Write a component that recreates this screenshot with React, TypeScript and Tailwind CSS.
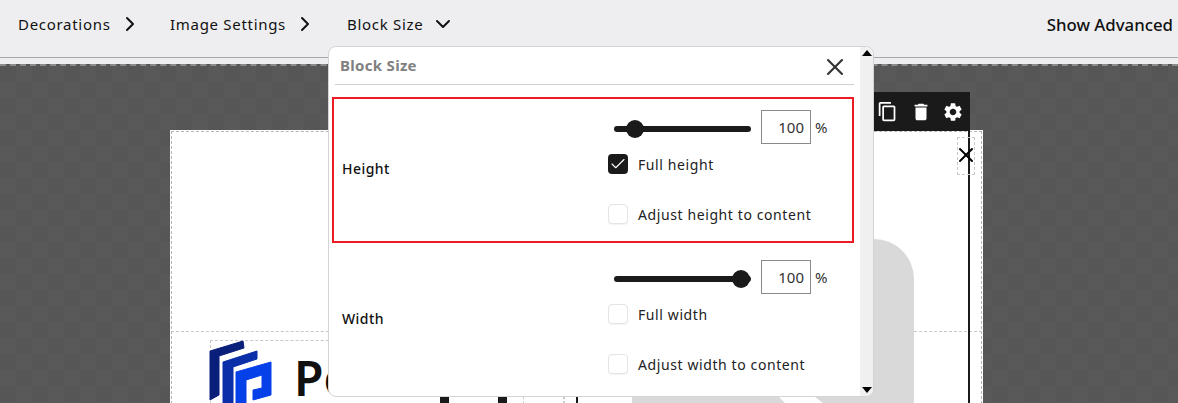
import { Check, ChevronDown, ChevronRight, X } from 'lucide-react'
import { MdContentCopy, MdDelete, MdSettings } from 'react-icons/md'

const font = "font-['Noto_Sans',sans-serif]"

function Crumb({ label, open, width }: { label: string; open?: boolean; width: string }) {
  return (
    <div className={`flex items-center ${width}`}>
      <span className="text-[15px] tracking-[0.7px] text-[#111]">{label}</span>
      {open ? (
        <ChevronDown className="ml-[8px] size-[24px] text-[#111]" strokeWidth={2} />
      ) : (
        <ChevronRight className="ml-[7px] size-[24px] text-[#111]" strokeWidth={2} />
      )}
    </div>
  )
}

function Slider({ value }: { value: number }) {
  return (
    <div className="relative mt-[4px] h-[6px] w-[137px] rounded-full bg-[#1a1a1a]">
      <div
        className="absolute top-[-6px] size-[18px] -translate-x-1/2 rounded-full bg-[#1a1a1a]"
        style={{ left: `${value}%` }}
      />
    </div>
  )
}

function Option({ label, checked }: { label: string; checked?: boolean }) {
  return (
    <div className="flex h-[20px] items-center">
      {checked ? (
        <div className="flex size-[20px] items-center justify-center rounded-[4px] bg-[#1a1a1a]">
          <Check className="size-[18px] text-white" strokeWidth={1.5} />
        </div>
      ) : (
        <div className="size-[20px] rounded-[4px] border border-[#e4e4e4] bg-white shadow-[0_1px_1px_rgba(0,0,0,0.05)]" />
      )}
      <span className="ml-[10px] text-[14px] tracking-[0.6px] text-[#222]">{label}</span>
    </div>
  )
}

function SizeRow({
  label,
  value,
  options,
  className,
}: {
  label: string
  value: number
  options: { label: string; checked?: boolean }[]
  className: string
}) {
  return (
    <div className={`flex ${className}`}>
      <div className="mt-[48px] w-[274px] self-start pl-[8px] text-[14px] font-medium tracking-[0.45px] text-[#111]">
        {label}
      </div>
      <div className="flex flex-col">
        <div className="flex h-[34px] items-center pl-[6px]">
          <Slider value={value} />
          <div className="ml-[10px] flex h-[34px] w-[50px] items-center justify-end border border-[#8a8a8a] pr-[6px] text-[15px] text-[#333]">
            100
          </div>
          <span className="ml-[4px] text-[15px] text-[#333]">%</span>
        </div>
        <div className="mt-[10px] flex flex-col gap-[30px]">
          {options.map((o) => (
            <Option key={o.label} label={o.label} checked={o.checked} />
          ))}
        </div>
      </div>
    </div>
  )
}

export default function App() {
  return (
    <div className={`${font} relative h-[403px] w-[1178px] overflow-hidden bg-[#eeeef0]`}>
      {/* top toolbar */}
      <div className="flex h-[58px] items-center border-b border-[#a8a8a8] pb-[9px] pl-[18px]">
        <Crumb label="Decorations" width="w-[152px]" />
        <Crumb label="Image Settings" width="w-[177px]" />
        <Crumb label="Block Size" open width="w-[200px]" />
        <span className="ml-auto pr-[5px] pt-[1px] text-[16.8px] font-medium text-[#111]">Show Advanced</span>
      </div>

      {/* canvas */}
      <div className="absolute inset-x-0 bottom-0 top-[64px] overflow-hidden border-t-2 border-dashed border-t-[#8c8c8c] bg-[repeating-conic-gradient(#595959_0_25%,#565656_0_50%)] bg-[length:32px_32px]">
        <div className="absolute left-[170px] top-[64px] h-[300px] w-[813px] border border-white bg-white">
          <div className="absolute inset-0 border border-dashed border-[#b5b5b5]" />
          <div className="absolute inset-x-0 top-[200px] border-t border-dashed border-[#c8c8c8]" />
          <div className="absolute left-[39px] top-[209px] h-[100px] w-[355px] border border-dashed border-[#c8c8c8]" />
          <div className="absolute left-[352px] top-[209px] h-[100px] border-l border-dashed border-[#c8c8c8]" />
          <div className="absolute left-[392px] top-[209px] h-[100px] border-l border-dashed border-[#c8c8c8]" />
          <svg className="absolute left-[38px] top-[209px]" width="70" height="63" viewBox="0 0 70 63">
            <path d="M1 11 L34 1 L35 8 L10 16 L10 55 L1 60 Z" fill="#0a1f7a" stroke="#0a1f7a" strokeLinejoin="round" />
            <path d="M14 22 L48 11 L48 19 L24 27 L24 63 L14 63 Z" fill="#0b2fa8" stroke="#0b2fa8" strokeLinejoin="round" />
            <path
              d="M27 32 L62 22 L62 55 L44 60 L44 50 L53 48 L53 35 L37 40 L37 63 L27 63 Z"
              fill="#0640e8"
              stroke="#0640e8"
              strokeLinejoin="round"
            />
          </svg>
          <span className="absolute left-[123px] top-[223px] text-[48px] font-semibold leading-none text-[#111]">Po</span>
          <div className="absolute left-[269px] top-[265px] h-[40px] w-[9px] bg-[#1a1a1a]" />
          <div className="absolute left-[327px] top-[265px] h-[40px] w-[9px] bg-[#1a1a1a]" />
          <div className="absolute left-[405px] top-[264px] h-[40px] w-[2px] bg-[#1a1a1a]" />
          {/* faint shape behind the panel */}
          <div className="absolute left-[461px] top-[108px] h-[200px] w-[282px] rounded-tr-[40px] bg-[#d9d9d9]" />
          <svg className="absolute left-[607px] top-[265px]" width="50" height="8" viewBox="0 0 50 8">
            <path d="M0 0 L36 0 L46 8 L8 8 Z" fill="#fff" />
          </svg>
          <div className="absolute bottom-0 left-[797px] top-0 w-[2px] bg-[#1a1a1a]" />
          <div className="absolute left-[786px] top-[6px] flex h-[38px] w-[18px] items-center justify-center border border-dashed border-[#c8c8c8]">
            <X className="-mt-[2px] size-[24px] shrink-0 text-black" strokeWidth={2} />
          </div>
        </div>
        <div className="absolute left-[860px] top-[26px] flex h-[39px] w-[110px] items-center bg-[#1a1a1a] pl-[17px] text-white">
          <MdContentCopy size={21} />
          <MdDelete size={22} className="ml-[12px]" />
          <MdSettings size={22} className="ml-[10px]" />
        </div>
      </div>

      {/* block size panel */}
      <div className="absolute left-[328px] top-[46px] flex h-[351px] w-[546px] rounded-[8px] border border-[#d4d4d4] bg-white">
        <div className="min-w-0 flex-1 pl-[3px] pr-[6px]">
          <div className="relative ml-[3px] flex h-[38px] items-center border-b border-[#cfcfcf] pl-[5px] text-[15px] font-bold tracking-[0.3px] text-[#808080]">
            Block Size
            <X className="absolute right-[5px] top-[6px] size-[28px] text-[#333]" strokeWidth={1.8} />
          </div>
          <SizeRow
            label="Height"
            value={15}
            className="mt-[12px] h-[146px] border-2 border-[#ed1c24] pt-[11px]"
            options={[{ label: 'Full height', checked: true }, { label: 'Adjust height to content' }]}
          />
          <SizeRow
            label="Width"
            value={93}
            className="mt-[1px] h-[146px] pl-[2px] pt-[16px]"
            options={[{ label: 'Full width' }, { label: 'Adjust width to content' }]}
          />
        </div>
        <div className="flex w-[13px] flex-col items-center justify-between rounded-r-[8px] bg-[#f0f0f0] py-[3px]">
          <div className="size-0 border-x-[5px] border-b-[6px] border-x-transparent border-b-black" />
          <div className="size-0 border-x-[5px] border-t-[6px] border-x-transparent border-t-black" />
        </div>
      </div>
    </div>
  )
}
